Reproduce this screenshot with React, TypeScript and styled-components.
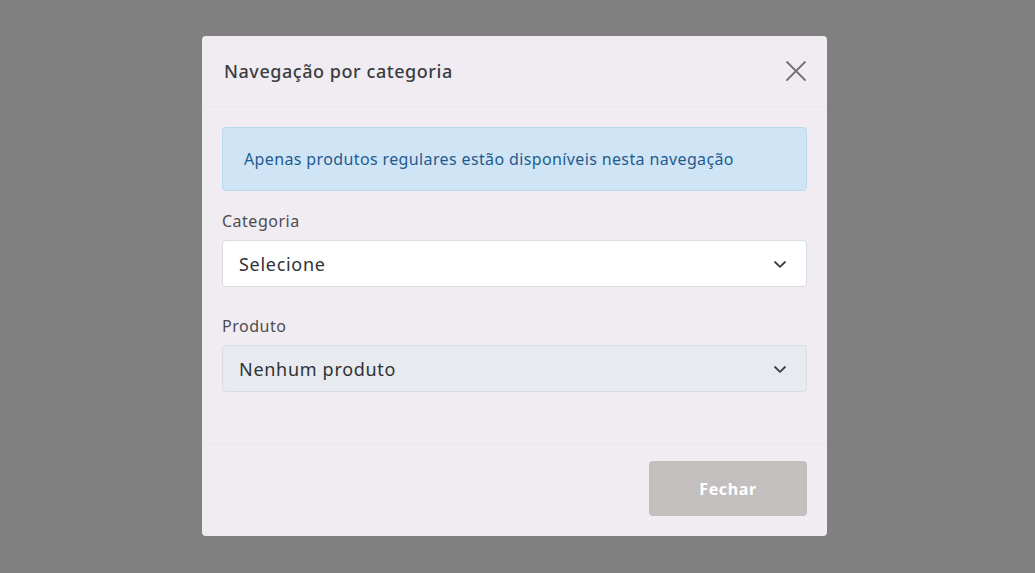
import React from "react";
import styled, { createGlobalStyle } from "styled-components";

const Global = createGlobalStyle`
  html, body { margin: 0; padding: 0; }
  body {
    font-family: "Noto Sans", "Open Sans", sans-serif;
    background: #808080;
  }
  * { box-sizing: border-box; }
`;

const Backdrop = styled.div`
  width: 1035px;
  height: 573px;
  background: #808080;
  display: flex;
  justify-content: flex-start;
  padding: 36px 0 0 202px;
`;

const Dialog = styled.div`
  width: 625px;
  height: 500px;
  background: #f1ecf2;
  border-radius: 4px;
  display: flex;
  flex-direction: column;
`;

const Header = styled.div`
  height: 71px;
  display: flex;
  align-items: center;
  justify-content: space-between;
  padding: 0 20px 0 22px;
  border-bottom: 1px solid #ece7ee;
`;

const Title = styled.h2`
  margin: 0;
  font-size: 18px;
  letter-spacing: 0.55px;
  font-weight: 500;
  color: #3a3d41;
`;

const CloseButton = styled.button`
  border: none;
  background: transparent;
  padding: 0;
  width: 22px;
  height: 22px;
  display: flex;
  align-items: center;
  justify-content: center;
  cursor: pointer;
`;

const Body = styled.div`
  flex: 1;
  padding: 20px 20px 0 20px;
  display: flex;
  flex-direction: column;
`;

const Alert = styled.div`
  height: 64px;
  background: #cfe5f6;
  border: 1px solid #b9d9f1;
  border-radius: 4px;
  display: flex;
  align-items: center;
  padding: 0 21px;
  color: #1f5b8e;
  font-size: 16px;
  letter-spacing: 0.37px;
  margin-bottom: 19px;
`;

const Group = styled.div<{ $last?: boolean }>`
  display: flex;
  flex-direction: column;
  margin-bottom: ${(p) => (p.$last ? 0 : 28)}px;
`;

const Label = styled.label`
  font-size: 16px;
  letter-spacing: 0.5px;
  line-height: 22px;
  color: #4a4d51;
  margin-bottom: 8px;
`;

const Select = styled.div<{ $disabled?: boolean }>`
  height: 47px;
  border: 1px solid #d9dce1;
  border-radius: 4px;
  background: ${(p) => (p.$disabled ? "#e7eaee" : "#ffffff")};
  display: flex;
  align-items: center;
  justify-content: space-between;
  padding: 1px 19px 0 16px;
  font-size: 18px;
  letter-spacing: 0.7px;
  color: #2f3236;
`;

const Footer = styled.div`
  height: 93px;
  border-top: 1px solid #ece7ee;
  display: flex;
  justify-content: flex-end;
  padding: 17px 20px 0 20px;
`;

const Button = styled.button`
  width: 158px;
  height: 55px;
  border: none;
  border-radius: 4px;
  background: #c3bfbf;
  color: #ffffff;
  font-family: inherit;
  font-size: 16px;
  letter-spacing: 0.6px;
  font-weight: 700;
`;

const Chevron = () => (
  <svg width="14" height="9" viewBox="0 0 14 9" fill="none">
    <path d="M2 2 L7 6.8 L12 2" stroke="#3a3d41" strokeWidth="1.8" strokeLinecap="round" strokeLinejoin="round" />
  </svg>
);

export default function App() {
  return (
    <>
      <Global />
      <Backdrop>
        <Dialog>
          <Header>
            <Title>Navegação por categoria</Title>
            <CloseButton aria-label="Fechar">
              <svg width="22" height="22" viewBox="0 0 22 22">
                <path d="M2 2 L20 20 M20 2 L2 20" stroke="#727272" strokeWidth="1.8" strokeLinecap="round" />
              </svg>
            </CloseButton>
          </Header>
          <Body>
            <Alert>Apenas produtos regulares estão disponíveis nesta navegação</Alert>
            <Group>
              <Label>Categoria</Label>
              <Select>
                <span>Selecione</span>
                <Chevron />
              </Select>
            </Group>
            <Group $last>
              <Label>Produto</Label>
              <Select $disabled>
                <span>Nenhum produto</span>
                <Chevron />
              </Select>
            </Group>
          </Body>
          <Footer>
            <Button>Fechar</Button>
          </Footer>
        </Dialog>
      </Backdrop>
    </>
  );
}
